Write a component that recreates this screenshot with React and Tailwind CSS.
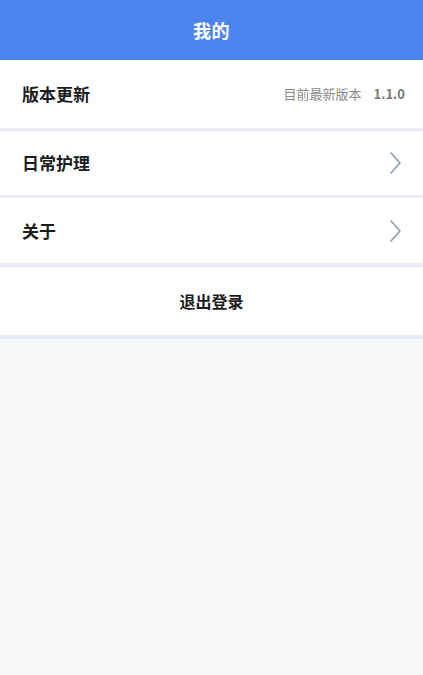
import { ChevronRight } from 'lucide-react'

const font = { fontFamily: '"Noto Sans CJK SC", "Noto Sans", sans-serif' }

function Row({ label, right, className }) {
  return (
    <div className={`flex items-center justify-between pl-[22px] pr-[18px] bg-white border-[#e9ecf3] ${className}`}>
      <span className="text-[17px] font-bold text-[#1c1c1c]">{label}</span>
      {right}
    </div>
  )
}

function Arrow() {
  return (
    <svg width="14" height="24" viewBox="0 0 14 24" fill="none" className="mr-[3px]">
      <path d="M3 2l9 10-9 10" stroke="#8c9aac" strokeWidth="1.6" strokeLinecap="round" strokeLinejoin="round" />
    </svg>
  )
}

export default function App() {
  return (
    <div className="w-[423px] h-[675px] bg-[#f7f8f8] flex flex-col" style={font}>
      {/* header */}
      <div className="h-[60px] bg-[#4d85ef] flex items-center justify-center">
        <span className="text-white text-[18px] font-bold tracking-wide">我的</span>
      </div>

      <Row
        label="版本更新"
        className="h-[71px] border-b-[3px]"
        right={
          <div className="flex items-center gap-3 text-[13px] text-[#8a8a8a]">
            <span>目前最新版本</span>
            <span className="font-bold text-[#777]">1.1.0</span>
          </div>
        }
      />
      <Row label="日常护理" className="h-[67px] border-b-[3px]" right={<Arrow />} />
      <Row label="关于" className="h-[69px] border-b-[4px]" right={<Arrow />} />

      {/* logout */}
      <div className="h-[72px] flex items-center justify-center bg-white border-b-[4px] border-[#e9ecf3]">
        <span className="text-[16px] font-bold text-[#1c1c1c]">退出登录</span>
      </div>
    </div>
  )
}
